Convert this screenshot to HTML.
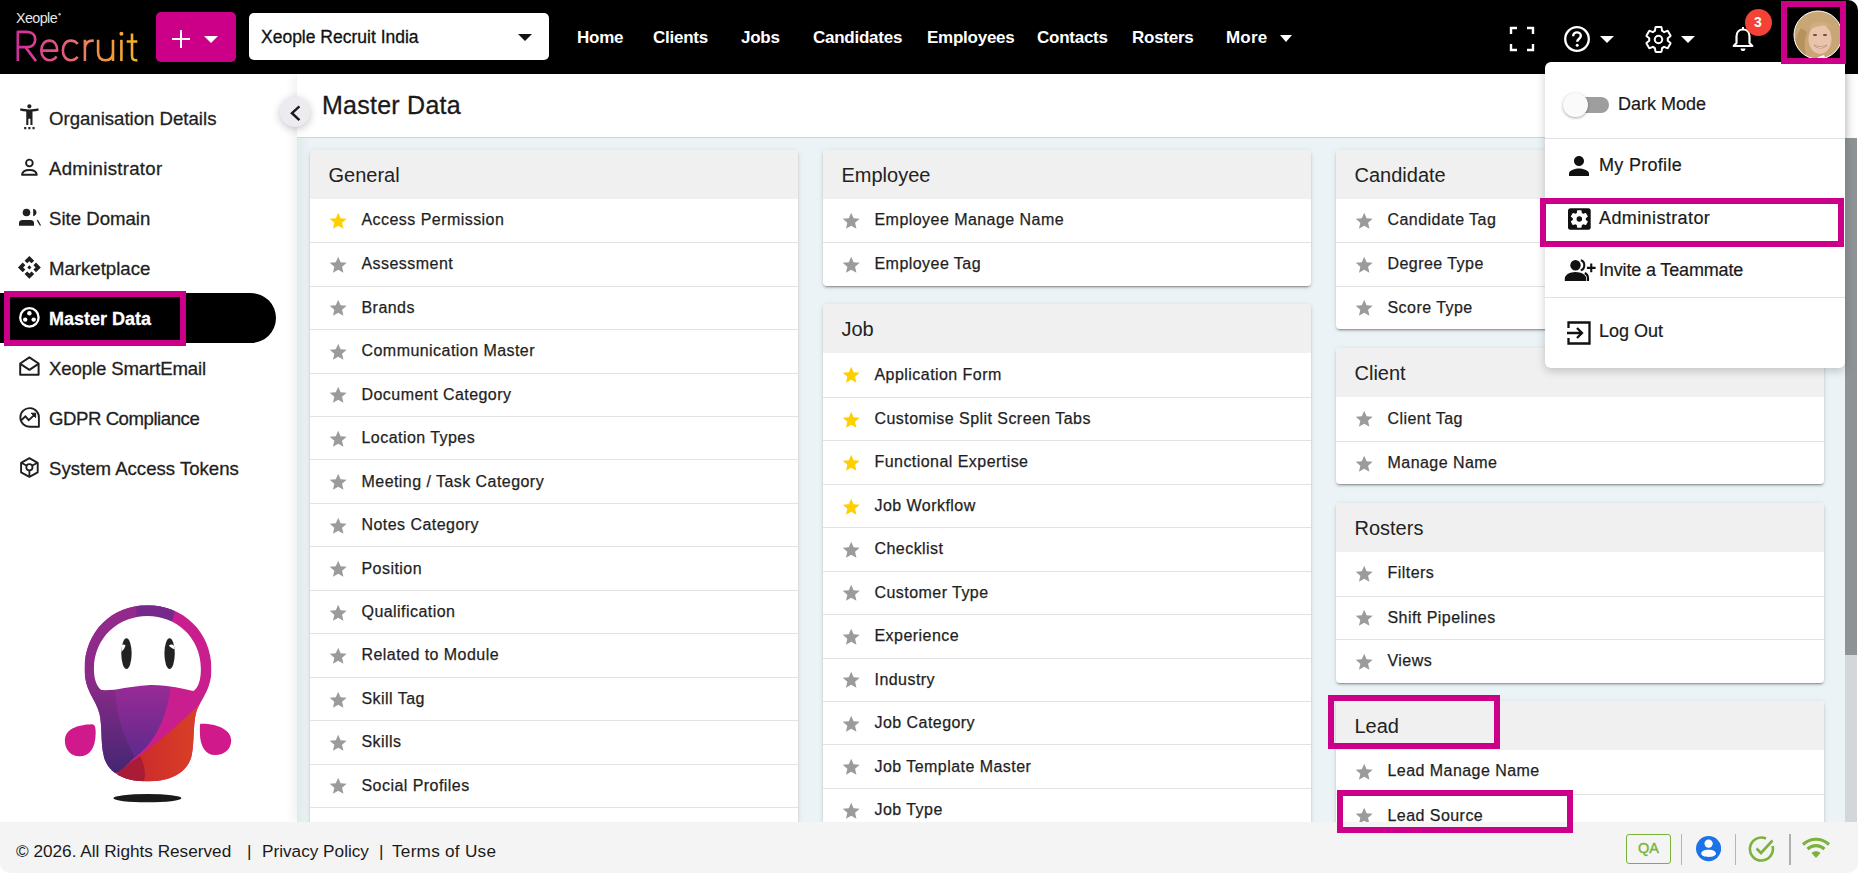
<!DOCTYPE html>
<html><head><meta charset="utf-8">
<style>
*{box-sizing:border-box}
html,body{margin:0;padding:0;width:1858px;height:873px;overflow:hidden;background:#fff;font-family:"Liberation Sans", sans-serif}
.abs{position:absolute}
#hdr{position:absolute;left:0;top:0;width:1858px;height:74px;background:#000;border-top-right-radius:10px}
.nav{position:absolute;top:26.5px;color:#fff;font-weight:700;font-size:17px;letter-spacing:-0.25px;line-height:22px;white-space:nowrap}
#side{position:absolute;left:0;top:74px;width:297px;height:748px;background:#fff}
.sitem{position:absolute;left:49px;height:24px;line-height:24px;white-space:nowrap;margin-top:0.7px;-webkit-text-stroke:0.3px currentColor}
#main{position:absolute;left:297px;top:74px;width:1548px;height:748px;background:#ecf3f6;box-shadow:-3px 0 10px rgba(0,0,0,0.07)}
#mclip{position:absolute;left:0;top:0;width:1548px;height:748px;overflow:hidden}
#mhead{position:absolute;left:0;top:0;width:1548px;height:63.5px;background:#fff;border-bottom:1px solid #cfd3dc}
.card{position:absolute;background:#fff;border-radius:4px;box-shadow:0 3px 1px -2px rgba(0,0,0,.2),0 2px 2px 0 rgba(0,0,0,.14),0 1px 5px 0 rgba(0,0,0,.12);overflow:hidden}
.chead{position:absolute;left:0;top:0;width:100%;background:#f0f0f0}
.chead span{position:absolute;left:18.5px;top:13px;font-size:20px;line-height:24px;color:#222}
.row{position:absolute;left:0;width:100%;border-top:1px solid #e2e2e2}
.row:first-of-type{border-top:none}
.row span{position:absolute;left:51.5px;top:11.2px;font-size:16px;letter-spacing:0.45px;color:#1f1f1f;white-space:nowrap;line-height:20px;-webkit-text-stroke:0.25px #1f1f1f}
#foot{position:absolute;left:0;top:822px;width:1858px;height:51px;background:#f4f4f4;border-radius:0 0 10px 10px}
.menu{position:absolute;left:1545px;top:62.3px;width:300px;height:306px;background:#fff;border-radius:6px 0 6px 6px;box-shadow:0 3px 10px rgba(0,0,0,0.2)}
.mi{position:absolute;font-size:18px;line-height:22px;color:#1a1a1a;white-space:nowrap;-webkit-text-stroke:0.2px #1a1a1a}
.hl{position:absolute;border:6px solid #cc0088}
</style></head><body>
<div id="hdr">
  <svg class="abs" style="left:0;top:0" width="150" height="74" viewBox="0 0 150 74">
  <defs><linearGradient id="rg" gradientUnits="userSpaceOnUse" x1="16" y1="0" x2="138" y2="0"><stop offset="0" stop-color="#d12e9e"/><stop offset="0.35" stop-color="#e0577e"/><stop offset="0.65" stop-color="#ef8a4e"/><stop offset="1" stop-color="#f6b224"/></linearGradient></defs>
  <g fill="none" stroke="url(#rg)" stroke-width="2.6" stroke-linecap="butt" stroke-linejoin="round">
  <path d="M17.8,61.1V31.9H26.8C32.3,31.9 35.2,35.1 35.2,39.5C35.2,43.9 32.3,47.1 26.8,47.1H17.8M25.5,47.1L36,61.1"/>
  <path d="M41.5,50.6H57.2C57.2,44.5 54,40.6 49.4,40.6C44.6,40.6 41.3,44.8 41.3,50.4C41.3,56 44.8,60.2 49.6,60.2C52.8,60.2 55.1,58.8 56.5,56.4"/>
  <path d="M77.6,44C76.1,41.8 73.6,40.6 70.8,40.6C66,40.6 62.9,44.8 62.9,50.4C62.9,56 66,60.2 70.8,60.2C73.6,60.2 76.1,59 77.6,56.8"/>
  <path d="M84.9,61.1V39.8M84.9,47.5C85.4,42.6 88.4,40.4 93.8,40.7"/>
  <path d="M98.1,39.8V52.2C98.1,57.5 101,60.2 105.5,60.2C110,60.2 113,57.5 113,52.2M113,39.8V61.1"/>
  <path d="M121.4,39.8V61.1"/>
  <path d="M132,33.6V55.8C132,59.4 133.6,60.6 137.4,60.2M126.7,41.5H137.3"/>
  </g>
  <circle cx="121.4" cy="33.7" r="2" fill="#f3a83a"/>
  <text x="16" y="22.7" font-family="Liberation Sans" font-size="14.6" fill="#e8e8e8" letter-spacing="-0.6" textLength="41" lengthAdjust="spacingAndGlyphs">Xeople</text>
  <circle cx="59.6" cy="14.3" r="1.2" fill="#bbb"/>
</svg>
  <div class="abs" style="left:156px;top:12px;width:80px;height:50px;background:#cc0088;border-radius:5px">
    <div class="abs" style="left:16px;top:26px;width:18px;height:2px;background:#fff"></div>
    <div class="abs" style="left:24px;top:18px;width:2px;height:18px;background:#fff"></div>
    <div class="abs" style="left:48px;top:24px;width:0;height:0;border-left:7px solid transparent;border-right:7px solid transparent;border-top:7px solid #fff"></div>
  </div>
  <div class="abs" style="left:249px;top:13px;width:300px;height:47px;background:#fff;border-radius:5px">
    <div class="abs" style="left:12px;top:13px;font-size:17.5px;line-height:22px;color:#111;-webkit-text-stroke:0.3px #111">Xeople Recruit India</div>
    <div class="abs" style="left:269px;top:21px;width:0;height:0;border-left:7px solid transparent;border-right:7px solid transparent;border-top:7px solid #111"></div>
  </div>
  <div class="nav" style="left:577px">Home</div>
  <div class="nav" style="left:653px">Clients</div>
  <div class="nav" style="left:741px">Jobs</div>
  <div class="nav" style="left:813px">Candidates</div>
  <div class="nav" style="left:927px">Employees</div>
  <div class="nav" style="left:1037px">Contacts</div>
  <div class="nav" style="left:1132px">Rosters</div>
  <div class="nav" style="left:1226px;letter-spacing:0.2px">More</div>
  <div class="abs" style="left:1280px;top:35px;width:0;height:0;border-left:6.5px solid transparent;border-right:6.5px solid transparent;border-top:7px solid #fff"></div>
  <!-- fullscreen -->
  <svg class="abs" style="left:1509px;top:26px" width="26" height="26" viewBox="0 0 26 26"><path fill="none" stroke="#fff" stroke-width="2.4" d="M2 8V2h6M18 2h6v6M24 18v6h-6M8 24H2v-6"/></svg>
  <!-- help -->
  <svg class="abs" style="left:1563px;top:25px" width="28" height="28" viewBox="0 0 28 28"><circle cx="14" cy="14" r="11.8" fill="none" stroke="#fff" stroke-width="2.3"/><path fill="none" stroke="#fff" stroke-width="2.4" d="M10.2 11.2c0-2.2 1.7-3.8 3.8-3.8s3.8 1.6 3.8 3.6c0 2.6-3.6 2.9-3.6 5.8"/><circle cx="14.2" cy="20.3" r="1.5" fill="#fff"/></svg>
  <div class="abs" style="left:1600px;top:36px;width:0;height:0;border-left:7px solid transparent;border-right:7px solid transparent;border-top:7px solid #fff"></div>
  <!-- gear -->
  <svg class="abs" style="left:1642.5px;top:23.5px" width="31" height="31" viewBox="0 0 24 24"><path fill="none" stroke="#fff" stroke-width="1.55" stroke-linejoin="round" d="M19.14,12.94c0.04-0.3,0.06-0.61,0.06-0.94c0-0.32-0.02-0.64-0.07-0.94l2.03-1.58c0.18-0.14,0.23-0.41,0.12-0.61l-1.92-3.32c-0.12-0.22-0.37-0.29-0.59-0.22l-2.39,0.96c-0.5-0.38-1.03-0.7-1.62-0.94L14.4,2.81c-0.04-0.24-0.24-0.41-0.48-0.41h-3.84c-0.24,0-0.43,0.17-0.47,0.41L9.25,5.35C8.66,5.59,8.12,5.92,7.63,6.29L5.24,5.33c-0.22-0.08-0.47,0-0.59,0.22L2.74,8.87C2.62,9.08,2.66,9.34,2.86,9.48l2.03,1.58C4.84,11.36,4.8,11.69,4.8,12s0.02,0.64,0.07,0.94l-2.03,1.58c-0.18,0.14-0.23,0.41-0.12,0.61l1.92,3.32c0.12,0.22,0.37,0.29,0.59,0.22l2.39-0.96c0.5,0.38,1.03,0.7,1.62,0.94l0.36,2.54c0.05,0.24,0.24,0.41,0.48,0.41h3.84c0.24,0,0.44-0.17,0.47-0.41l0.36-2.54c0.59-0.24,1.13-0.56,1.62-0.94l2.39,0.96c0.22,0.08,0.47,0,0.59-0.22l1.92-3.32c0.12-0.22,0.07-0.47-0.12-0.61L19.14,12.94z"/><circle cx="12" cy="12" r="2.9" fill="none" stroke="#fff" stroke-width="1.55"/></svg>
  <div class="abs" style="left:1681px;top:36px;width:0;height:0;border-left:7px solid transparent;border-right:7px solid transparent;border-top:7px solid #fff"></div>
  <!-- bell -->
  <svg class="abs" style="left:1731px;top:26px" width="24" height="27" viewBox="0 0 24 27"><path fill="none" stroke="#fff" stroke-width="2.2" stroke-linejoin="round" d="M12 3.5c-4 0-6.5 3-6.5 7v6.5l-2.8 3h18.6l-2.8-3v-6.5c0-4-2.5-7-6.5-7z"/><path fill="#fff" d="M9.5 22.5h5c0 1.6-1.1 2.6-2.5 2.6s-2.5-1-2.5-2.6z"/><rect x="11" y="1" width="2" height="3" fill="#fff"/></svg>
  <div class="abs" style="left:1744.5px;top:8.5px;width:27px;height:27px;border-radius:50%;background:#f44336;color:#fff;font-weight:700;font-size:14px;line-height:27px;text-align:center">3</div>
  <!-- avatar -->
  <div class="abs" style="left:1781px;top:1px;width:65px;height:63px;border:6px solid #cc0088;z-index:2"></div>
  <svg class="abs" style="left:1793px;top:10px" width="50" height="50" viewBox="0 0 50 50">
  <defs><clipPath id="avc"><circle cx="25" cy="25" r="24"/></clipPath>
  <radialGradient id="hair" cx="0.45" cy="0.4" r="0.7"><stop offset="0" stop-color="#d8b88a"/><stop offset="0.7" stop-color="#c4a070"/><stop offset="1" stop-color="#9a7a50"/></radialGradient></defs>
  <g clip-path="url(#avc)">
  <rect width="50" height="50" fill="url(#hair)"/>
  <path d="M3,20 C6,6 20,2 30,4 C42,6 48,16 48,28 L48,50 L0,50 Z" fill="#c9a676"/>
  <path d="M14,22 C10,32 12,42 14,50 L2,50 C0,40 2,26 8,18 Z" fill="#b8925e"/>
  <ellipse cx="27" cy="29" rx="11.5" ry="15" fill="#e9c4aa"/>
  <path d="M17,16 C22,10 34,10 40,18 C36,15 26,14 17,20 Z" fill="#cfae80"/>
  <ellipse cx="22" cy="25" rx="2.2" ry="1" fill="#6a4a3a"/>
  <ellipse cx="32" cy="25" rx="2.2" ry="1" fill="#6a4a3a"/>
  <path d="M21,35 C24,39 31,39 34,35 C31,37 24,37 21,35 Z" fill="#f4f0ea" stroke="#b07060" stroke-width="0.6"/>
  <path d="M40,46 L50,40 L50,50 L38,50 Z" fill="#3a3a36"/>
  <path d="M25,47 L31,45 L33,50 L24,50 Z" fill="#f8f8f8"/>
  </g>
  <circle cx="25" cy="25" r="24" fill="none" stroke="#fff" stroke-width="1"/>
</svg>
</div>

<div id="side">
  <div class="abs" style="left:0;top:0;width:297px;height:748px">
  </div>
</div>
<div class="sitem" style="top:106px;color:#1f1f1f;font-weight:400;font-size:18.6px;letter-spacing:0px">Organisation Details</div><div class="sitem" style="top:156px;color:#1f1f1f;font-weight:400;font-size:18.6px;letter-spacing:0.3px">Administrator</div><div class="sitem" style="top:206px;color:#1f1f1f;font-weight:400;font-size:18.6px;letter-spacing:0px">Site Domain</div><div class="sitem" style="top:256px;color:#1f1f1f;font-weight:400;font-size:18.6px;letter-spacing:0px">Marketplace</div><div style="position:absolute;left:0;top:293px;width:276px;height:50px;background:#000;border-radius:0 25px 25px 0"></div><div class="sitem" style="top:306px;color:#fff;font-weight:700;font-size:18px;letter-spacing:0px">Master Data</div><div class="sitem" style="top:356px;color:#1f1f1f;font-weight:400;font-size:18.6px;letter-spacing:-0.12px">Xeople SmartEmail</div><div class="sitem" style="top:406px;color:#1f1f1f;font-weight:400;font-size:18.6px;letter-spacing:-0.45px">GDPR Compliance</div><div class="sitem" style="top:456px;color:#1f1f1f;font-weight:400;font-size:18.6px;letter-spacing:0px">System Access Tokens</div>
<svg style="position:absolute;left:0;top:0" width="297" height="500" viewBox="0 0 297 500">
<g fill="#1f1f1f" transform="translate(16.9,104.2) scale(1.04)"><path d="M20.5,4c-2.61,0.7-5.67,1-8.5,1S6.11,4.7,3.5,4L3,6c1.86,0.5,4,0.83,6,1v13h2v-6h2v6h2V7c2-0.17,4.14-0.5,6-1L20.5,4z M12,4c1.1,0,2-0.9,2-2s-0.9-2-2-2s-2,0.9-2,2S10.9,4,12,4z M7,24h2v-2H7V24z M11,24h2v-2h-2V24z M15,24h2v-2h-2V24z"/></g>
<circle cx="29.4" cy="163" r="3.35" fill="none" stroke="#1f1f1f" stroke-width="1.9"/>
<path d="M22,174.8c0.3-3.3,3.4-4.8,7.4-4.8s7.1,1.5,7.4,4.8z" fill="none" stroke="#1f1f1f" stroke-width="1.9" stroke-linejoin="round"/>
<circle cx="26.5" cy="212.5" r="3.8" fill="#1f1f1f"/>
<path d="M19,225.7v-2.7c0-2,1.5-3,3.5-3h8c2,0,3.5,1,3.5,3v2.7z" fill="#1f1f1f"/>
<path d="M33.2,208.8c1.9,0.5,3.3,1.8,3.3,3.7s-1.4,3.2-3.3,3.7z" fill="#1f1f1f"/>
<path d="M37.3,220.2l3.2,5.3" stroke="#1f1f1f" stroke-width="1.3"/>
<g fill="#1f1f1f" transform="translate(16.9,254.9) scale(1.04)"><path d="M14 12l-2 2-2-2 2-2 2 2zm-2-6l2.12 2.12 2.5-2.5L12 1 7.38 5.62l2.5 2.5L12 6zm-6 6l2.12-2.12-2.5-2.5L1 12l4.62 4.62 2.5-2.5L6 12zm12 0l-2.12 2.12 2.5 2.5L23 12l-4.62-4.62-2.5 2.5L18 12zm-6 6l-2.12-2.12-2.5 2.5L12 23l4.62-4.62-2.5-2.5L12 18z"/></g>
<circle cx="29.4" cy="317.4" r="9.2" fill="none" stroke="#fff" stroke-width="2.3"/>
<circle cx="29.4" cy="313.2" r="2.2" fill="#fff"/><circle cx="25.2" cy="319.6" r="2.2" fill="#fff"/><circle cx="33.7" cy="319.6" r="2.2" fill="#fff"/>
<path d="M20.2,363.5L29.4,357.3l9.2,6.2v11.3H20.2z" fill="none" stroke="#1f1f1f" stroke-width="2" stroke-linejoin="round"/>
<path d="M20.4,363.8L29.4,369.8l9,-6" fill="none" stroke="#1f1f1f" stroke-width="2" stroke-linejoin="round"/>
<path d="M38.9,418.4V426.7H30.2A9.3,9.3 0 1 1 38.9,418.4z" fill="none" stroke="#1f1f1f" stroke-width="1.9" stroke-linejoin="round"/>
<path d="M21.3,420.2l4.1,-3.8l3.3,3.8l6,-5.6" fill="none" stroke="#1f1f1f" stroke-width="1.9"/>
<path d="M31.2,413.2h4.4v4.4z" fill="#1f1f1f" stroke="#1f1f1f" stroke-width="1"/>
<circle cx="37.2" cy="425" r="0.6" fill="#fff"/>
<path d="M29.4,458.2l8.3,4.6v9.5l-8.3,4.6l-8.3,-4.6v-9.5z" fill="none" stroke="#1f1f1f" stroke-width="1.9" stroke-linejoin="round"/>
<circle cx="29.4" cy="467.3" r="3.1" fill="none" stroke="#1f1f1f" stroke-width="1.8"/>
<path d="M29.4,470.4v6.6M21.5,462.8l5.2,3M37.3,462.8l-5.2,3" fill="none" stroke="#1f1f1f" stroke-width="1.8"/>
</svg>
<div class="hl" style="left:4.2px;top:291px;width:181.5px;height:55px"></div>
<svg style="position:absolute;left:55px;top:595px" width="190" height="215" viewBox="0 0 771 873" preserveAspectRatio="none">
<defs>
<clipPath id="bodyclip"><path d="M375,42 C520,42 635,150 635,300 C635,390 585,430 572,480 C560,530 565,600 555,650 C540,720 470,757 375,757 C280,757 210,720 197,650 C185,600 192,530 180,480 C165,420 120,390 120,300 C120,150 230,42 375,42 Z"/></clipPath>
<linearGradient id="lg1" x1="0" y1="0" x2="0" y2="1"><stop offset="0" stop-color="#952a8c"/><stop offset="0.45" stop-color="#8a2a88"/><stop offset="1" stop-color="#3c2670"/></linearGradient>
<linearGradient id="lg2" x1="0" y1="0" x2="1" y2="0"><stop offset="0" stop-color="#c51f2e"/><stop offset="1" stop-color="#e04a24"/></linearGradient>
<linearGradient id="lg3" x1="0" y1="0" x2="0" y2="1"><stop offset="0" stop-color="#9a2a96"/><stop offset="1" stop-color="#5e2a8c"/></linearGradient>
</defs>
<ellipse cx="375" cy="825" rx="138" ry="17" fill="#1a1a1a"/>
<path d="M40,590 C40,545 90,527 150,525 C163,525 165,540 165,560 C165,620 140,655 100,655 C60,655 40,625 40,590 Z" fill="#d0198a"/>
<path d="M590,523 C650,520 715,545 715,590 C715,625 690,650 650,650 C610,650 588,610 588,560 C588,540 588,523 590,523 Z" fill="#d0198a"/>
<g clip-path="url(#bodyclip)">
<rect x="0" y="0" width="771" height="873" fill="#c81e8e"/>
<path d="M100,20 L480,20 C475,150 470,300 470,370 C430,560 340,650 258,720 L100,760 Z" fill="url(#lg1)"/>
<path d="M330,30 C400,30 460,40 490,60 L470,120 C420,100 370,95 330,100 Z" fill="#6a2a8a" opacity="0.7"/>
<path d="M245,380 C300,360 420,355 470,370 C450,520 400,600 325,660 C290,600 245,500 245,380 Z" fill="url(#lg3)"/>
<path d="M258,720 C360,640 470,560 600,430 L700,430 L700,800 L200,800 Z" fill="url(#lg2)"/>
<path d="M258,720 C290,690 320,670 345,655 C365,690 370,730 360,760 L240,760 Z" fill="#a81c36"/>
</g>
<path d="M375,85 C490,85 592,170 592,300 C592,345 582,375 562,390 C520,382 450,362 375,366 C300,370 240,390 188,386 C168,370 158,340 158,300 C158,170 260,85 375,85 Z" fill="#fff"/>
<ellipse cx="290" cy="238" rx="21" ry="62" fill="#222"/>
<ellipse cx="465" cy="238" rx="21" ry="62" fill="#222"/>
<path d="M286,205 C280,200 274,200 270,206 L270,230 C278,222 284,214 286,205 Z" fill="#fff"/>
<path d="M482,205 C476,200 468,200 462,206 C468,212 476,218 486,220 Z" fill="#fff"/>
</svg>

<div id="main"><div id="mclip">
  <div id="mhead">
    <div class="abs" style="left:25px;top:17px;font-size:25px;line-height:28px;color:#1a1a1a;letter-spacing:0.25px;-webkit-text-stroke:0.3px #1a1a1a">Master Data</div>
  </div>
  <div class="abs" style="left:0;top:63.5px;width:13px;height:700px;background:linear-gradient(90deg,rgba(0,0,0,0.04),rgba(0,0,0,0))"></div>
  <div style="position:absolute;left:-297px;top:-74px;width:1858px;height:873px">
  <div class="card" style="left:310px;top:149.8px;width:488px;height:700.75px"><div class="chead" style="height:49px"><span>General</span></div><div class="row" style="top:49.00px;height:43.45px;border-top:none;padding-top:0"><svg style="position:absolute;left:17.9px;top:11.8px" width="20.4" height="20.4" viewBox="0 0 24 24"><path fill="#ffd000" d="M12 17.27L18.18 21l-1.64-7.03L22 9.24l-7.19-.61L12 2 9.19 8.63 2 9.24l5.46 4.73L5.82 21z"/></svg><span>Access Permission</span></div><div class="row" style="top:92.45px;height:43.45px"><svg style="position:absolute;left:17.9px;top:11.8px" width="20.4" height="20.4" viewBox="0 0 24 24"><path fill="#9b9b9b" d="M12 17.27L18.18 21l-1.64-7.03L22 9.24l-7.19-.61L12 2 9.19 8.63 2 9.24l5.46 4.73L5.82 21z"/></svg><span>Assessment</span></div><div class="row" style="top:135.90px;height:43.45px"><svg style="position:absolute;left:17.9px;top:11.8px" width="20.4" height="20.4" viewBox="0 0 24 24"><path fill="#9b9b9b" d="M12 17.27L18.18 21l-1.64-7.03L22 9.24l-7.19-.61L12 2 9.19 8.63 2 9.24l5.46 4.73L5.82 21z"/></svg><span>Brands</span></div><div class="row" style="top:179.35px;height:43.45px"><svg style="position:absolute;left:17.9px;top:11.8px" width="20.4" height="20.4" viewBox="0 0 24 24"><path fill="#9b9b9b" d="M12 17.27L18.18 21l-1.64-7.03L22 9.24l-7.19-.61L12 2 9.19 8.63 2 9.24l5.46 4.73L5.82 21z"/></svg><span>Communication Master</span></div><div class="row" style="top:222.80px;height:43.45px"><svg style="position:absolute;left:17.9px;top:11.8px" width="20.4" height="20.4" viewBox="0 0 24 24"><path fill="#9b9b9b" d="M12 17.27L18.18 21l-1.64-7.03L22 9.24l-7.19-.61L12 2 9.19 8.63 2 9.24l5.46 4.73L5.82 21z"/></svg><span>Document Category</span></div><div class="row" style="top:266.25px;height:43.45px"><svg style="position:absolute;left:17.9px;top:11.8px" width="20.4" height="20.4" viewBox="0 0 24 24"><path fill="#9b9b9b" d="M12 17.27L18.18 21l-1.64-7.03L22 9.24l-7.19-.61L12 2 9.19 8.63 2 9.24l5.46 4.73L5.82 21z"/></svg><span>Location Types</span></div><div class="row" style="top:309.70px;height:43.45px"><svg style="position:absolute;left:17.9px;top:11.8px" width="20.4" height="20.4" viewBox="0 0 24 24"><path fill="#9b9b9b" d="M12 17.27L18.18 21l-1.64-7.03L22 9.24l-7.19-.61L12 2 9.19 8.63 2 9.24l5.46 4.73L5.82 21z"/></svg><span>Meeting / Task Category</span></div><div class="row" style="top:353.15px;height:43.45px"><svg style="position:absolute;left:17.9px;top:11.8px" width="20.4" height="20.4" viewBox="0 0 24 24"><path fill="#9b9b9b" d="M12 17.27L18.18 21l-1.64-7.03L22 9.24l-7.19-.61L12 2 9.19 8.63 2 9.24l5.46 4.73L5.82 21z"/></svg><span>Notes Category</span></div><div class="row" style="top:396.60px;height:43.45px"><svg style="position:absolute;left:17.9px;top:11.8px" width="20.4" height="20.4" viewBox="0 0 24 24"><path fill="#9b9b9b" d="M12 17.27L18.18 21l-1.64-7.03L22 9.24l-7.19-.61L12 2 9.19 8.63 2 9.24l5.46 4.73L5.82 21z"/></svg><span>Position</span></div><div class="row" style="top:440.05px;height:43.45px"><svg style="position:absolute;left:17.9px;top:11.8px" width="20.4" height="20.4" viewBox="0 0 24 24"><path fill="#9b9b9b" d="M12 17.27L18.18 21l-1.64-7.03L22 9.24l-7.19-.61L12 2 9.19 8.63 2 9.24l5.46 4.73L5.82 21z"/></svg><span>Qualification</span></div><div class="row" style="top:483.50px;height:43.45px"><svg style="position:absolute;left:17.9px;top:11.8px" width="20.4" height="20.4" viewBox="0 0 24 24"><path fill="#9b9b9b" d="M12 17.27L18.18 21l-1.64-7.03L22 9.24l-7.19-.61L12 2 9.19 8.63 2 9.24l5.46 4.73L5.82 21z"/></svg><span>Related to Module</span></div><div class="row" style="top:526.95px;height:43.45px"><svg style="position:absolute;left:17.9px;top:11.8px" width="20.4" height="20.4" viewBox="0 0 24 24"><path fill="#9b9b9b" d="M12 17.27L18.18 21l-1.64-7.03L22 9.24l-7.19-.61L12 2 9.19 8.63 2 9.24l5.46 4.73L5.82 21z"/></svg><span>Skill Tag</span></div><div class="row" style="top:570.40px;height:43.45px"><svg style="position:absolute;left:17.9px;top:11.8px" width="20.4" height="20.4" viewBox="0 0 24 24"><path fill="#9b9b9b" d="M12 17.27L18.18 21l-1.64-7.03L22 9.24l-7.19-.61L12 2 9.19 8.63 2 9.24l5.46 4.73L5.82 21z"/></svg><span>Skills</span></div><div class="row" style="top:613.85px;height:43.45px"><svg style="position:absolute;left:17.9px;top:11.8px" width="20.4" height="20.4" viewBox="0 0 24 24"><path fill="#9b9b9b" d="M12 17.27L18.18 21l-1.64-7.03L22 9.24l-7.19-.61L12 2 9.19 8.63 2 9.24l5.46 4.73L5.82 21z"/></svg><span>Social Profiles</span></div><div class="row" style="top:657.30px;height:43.45px"><svg style="position:absolute;left:17.9px;top:11.8px" width="20.4" height="20.4" viewBox="0 0 24 24"><path fill="#9b9b9b" d="M12 17.27L18.18 21l-1.64-7.03L22 9.24l-7.19-.61L12 2 9.19 8.63 2 9.24l5.46 4.73L5.82 21z"/></svg><span>Sources</span></div></div><div class="card" style="left:823px;top:149.8px;width:488px;height:135.90px"><div class="chead" style="height:49px"><span>Employee</span></div><div class="row" style="top:49.00px;height:43.45px;border-top:none;padding-top:0"><svg style="position:absolute;left:17.9px;top:11.8px" width="20.4" height="20.4" viewBox="0 0 24 24"><path fill="#9b9b9b" d="M12 17.27L18.18 21l-1.64-7.03L22 9.24l-7.19-.61L12 2 9.19 8.63 2 9.24l5.46 4.73L5.82 21z"/></svg><span>Employee Manage Name</span></div><div class="row" style="top:92.45px;height:43.45px"><svg style="position:absolute;left:17.9px;top:11.8px" width="20.4" height="20.4" viewBox="0 0 24 24"><path fill="#9b9b9b" d="M12 17.27L18.18 21l-1.64-7.03L22 9.24l-7.19-.61L12 2 9.19 8.63 2 9.24l5.46 4.73L5.82 21z"/></svg><span>Employee Tag</span></div></div><div class="card" style="left:823px;top:304.4px;width:488px;height:570.40px"><div class="chead" style="height:49px"><span>Job</span></div><div class="row" style="top:49.00px;height:43.45px;border-top:none;padding-top:0"><svg style="position:absolute;left:17.9px;top:11.8px" width="20.4" height="20.4" viewBox="0 0 24 24"><path fill="#ffd000" d="M12 17.27L18.18 21l-1.64-7.03L22 9.24l-7.19-.61L12 2 9.19 8.63 2 9.24l5.46 4.73L5.82 21z"/></svg><span>Application Form</span></div><div class="row" style="top:92.45px;height:43.45px"><svg style="position:absolute;left:17.9px;top:11.8px" width="20.4" height="20.4" viewBox="0 0 24 24"><path fill="#ffd000" d="M12 17.27L18.18 21l-1.64-7.03L22 9.24l-7.19-.61L12 2 9.19 8.63 2 9.24l5.46 4.73L5.82 21z"/></svg><span>Customise Split Screen Tabs</span></div><div class="row" style="top:135.90px;height:43.45px"><svg style="position:absolute;left:17.9px;top:11.8px" width="20.4" height="20.4" viewBox="0 0 24 24"><path fill="#ffd000" d="M12 17.27L18.18 21l-1.64-7.03L22 9.24l-7.19-.61L12 2 9.19 8.63 2 9.24l5.46 4.73L5.82 21z"/></svg><span>Functional Expertise</span></div><div class="row" style="top:179.35px;height:43.45px"><svg style="position:absolute;left:17.9px;top:11.8px" width="20.4" height="20.4" viewBox="0 0 24 24"><path fill="#ffd000" d="M12 17.27L18.18 21l-1.64-7.03L22 9.24l-7.19-.61L12 2 9.19 8.63 2 9.24l5.46 4.73L5.82 21z"/></svg><span>Job Workflow</span></div><div class="row" style="top:222.80px;height:43.45px"><svg style="position:absolute;left:17.9px;top:11.8px" width="20.4" height="20.4" viewBox="0 0 24 24"><path fill="#9b9b9b" d="M12 17.27L18.18 21l-1.64-7.03L22 9.24l-7.19-.61L12 2 9.19 8.63 2 9.24l5.46 4.73L5.82 21z"/></svg><span>Checklist</span></div><div class="row" style="top:266.25px;height:43.45px"><svg style="position:absolute;left:17.9px;top:11.8px" width="20.4" height="20.4" viewBox="0 0 24 24"><path fill="#9b9b9b" d="M12 17.27L18.18 21l-1.64-7.03L22 9.24l-7.19-.61L12 2 9.19 8.63 2 9.24l5.46 4.73L5.82 21z"/></svg><span>Customer Type</span></div><div class="row" style="top:309.70px;height:43.45px"><svg style="position:absolute;left:17.9px;top:11.8px" width="20.4" height="20.4" viewBox="0 0 24 24"><path fill="#9b9b9b" d="M12 17.27L18.18 21l-1.64-7.03L22 9.24l-7.19-.61L12 2 9.19 8.63 2 9.24l5.46 4.73L5.82 21z"/></svg><span>Experience</span></div><div class="row" style="top:353.15px;height:43.45px"><svg style="position:absolute;left:17.9px;top:11.8px" width="20.4" height="20.4" viewBox="0 0 24 24"><path fill="#9b9b9b" d="M12 17.27L18.18 21l-1.64-7.03L22 9.24l-7.19-.61L12 2 9.19 8.63 2 9.24l5.46 4.73L5.82 21z"/></svg><span>Industry</span></div><div class="row" style="top:396.60px;height:43.45px"><svg style="position:absolute;left:17.9px;top:11.8px" width="20.4" height="20.4" viewBox="0 0 24 24"><path fill="#9b9b9b" d="M12 17.27L18.18 21l-1.64-7.03L22 9.24l-7.19-.61L12 2 9.19 8.63 2 9.24l5.46 4.73L5.82 21z"/></svg><span>Job Category</span></div><div class="row" style="top:440.05px;height:43.45px"><svg style="position:absolute;left:17.9px;top:11.8px" width="20.4" height="20.4" viewBox="0 0 24 24"><path fill="#9b9b9b" d="M12 17.27L18.18 21l-1.64-7.03L22 9.24l-7.19-.61L12 2 9.19 8.63 2 9.24l5.46 4.73L5.82 21z"/></svg><span>Job Template Master</span></div><div class="row" style="top:483.50px;height:43.45px"><svg style="position:absolute;left:17.9px;top:11.8px" width="20.4" height="20.4" viewBox="0 0 24 24"><path fill="#9b9b9b" d="M12 17.27L18.18 21l-1.64-7.03L22 9.24l-7.19-.61L12 2 9.19 8.63 2 9.24l5.46 4.73L5.82 21z"/></svg><span>Job Type</span></div><div class="row" style="top:526.95px;height:43.45px"><svg style="position:absolute;left:17.9px;top:11.8px" width="20.4" height="20.4" viewBox="0 0 24 24"><path fill="#9b9b9b" d="M12 17.27L18.18 21l-1.64-7.03L22 9.24l-7.19-.61L12 2 9.19 8.63 2 9.24l5.46 4.73L5.82 21z"/></svg><span>Job Status</span></div></div><div class="card" style="left:1336px;top:149.8px;width:488px;height:179.35px"><div class="chead" style="height:49px"><span>Candidate</span></div><div class="row" style="top:49.00px;height:43.45px;border-top:none;padding-top:0"><svg style="position:absolute;left:17.9px;top:11.8px" width="20.4" height="20.4" viewBox="0 0 24 24"><path fill="#9b9b9b" d="M12 17.27L18.18 21l-1.64-7.03L22 9.24l-7.19-.61L12 2 9.19 8.63 2 9.24l5.46 4.73L5.82 21z"/></svg><span>Candidate Tag</span></div><div class="row" style="top:92.45px;height:43.45px"><svg style="position:absolute;left:17.9px;top:11.8px" width="20.4" height="20.4" viewBox="0 0 24 24"><path fill="#9b9b9b" d="M12 17.27L18.18 21l-1.64-7.03L22 9.24l-7.19-.61L12 2 9.19 8.63 2 9.24l5.46 4.73L5.82 21z"/></svg><span>Degree Type</span></div><div class="row" style="top:135.90px;height:43.45px"><svg style="position:absolute;left:17.9px;top:11.8px" width="20.4" height="20.4" viewBox="0 0 24 24"><path fill="#9b9b9b" d="M12 17.27L18.18 21l-1.64-7.03L22 9.24l-7.19-.61L12 2 9.19 8.63 2 9.24l5.46 4.73L5.82 21z"/></svg><span>Score Type</span></div></div><div class="card" style="left:1336px;top:348.4px;width:488px;height:135.90px"><div class="chead" style="height:49px"><span>Client</span></div><div class="row" style="top:49.00px;height:43.45px;border-top:none;padding-top:0"><svg style="position:absolute;left:17.9px;top:11.8px" width="20.4" height="20.4" viewBox="0 0 24 24"><path fill="#9b9b9b" d="M12 17.27L18.18 21l-1.64-7.03L22 9.24l-7.19-.61L12 2 9.19 8.63 2 9.24l5.46 4.73L5.82 21z"/></svg><span>Client Tag</span></div><div class="row" style="top:92.45px;height:43.45px"><svg style="position:absolute;left:17.9px;top:11.8px" width="20.4" height="20.4" viewBox="0 0 24 24"><path fill="#9b9b9b" d="M12 17.27L18.18 21l-1.64-7.03L22 9.24l-7.19-.61L12 2 9.19 8.63 2 9.24l5.46 4.73L5.82 21z"/></svg><span>Manage Name</span></div></div><div class="card" style="left:1336px;top:503.2px;width:488px;height:179.35px"><div class="chead" style="height:49px"><span>Rosters</span></div><div class="row" style="top:49.00px;height:43.45px;border-top:none;padding-top:0"><svg style="position:absolute;left:17.9px;top:11.8px" width="20.4" height="20.4" viewBox="0 0 24 24"><path fill="#9b9b9b" d="M12 17.27L18.18 21l-1.64-7.03L22 9.24l-7.19-.61L12 2 9.19 8.63 2 9.24l5.46 4.73L5.82 21z"/></svg><span>Filters</span></div><div class="row" style="top:92.45px;height:43.45px"><svg style="position:absolute;left:17.9px;top:11.8px" width="20.4" height="20.4" viewBox="0 0 24 24"><path fill="#9b9b9b" d="M12 17.27L18.18 21l-1.64-7.03L22 9.24l-7.19-.61L12 2 9.19 8.63 2 9.24l5.46 4.73L5.82 21z"/></svg><span>Shift Pipelines</span></div><div class="row" style="top:135.90px;height:43.45px"><svg style="position:absolute;left:17.9px;top:11.8px" width="20.4" height="20.4" viewBox="0 0 24 24"><path fill="#9b9b9b" d="M12 17.27L18.18 21l-1.64-7.03L22 9.24l-7.19-.61L12 2 9.19 8.63 2 9.24l5.46 4.73L5.82 21z"/></svg><span>Views</span></div></div><div class="card" style="left:1336px;top:701.2px;width:488px;height:179.35px"><div class="chead" style="height:49px"><span>Lead</span></div><div class="row" style="top:49.00px;height:43.45px;border-top:none;padding-top:0"><svg style="position:absolute;left:17.9px;top:11.8px" width="20.4" height="20.4" viewBox="0 0 24 24"><path fill="#9b9b9b" d="M12 17.27L18.18 21l-1.64-7.03L22 9.24l-7.19-.61L12 2 9.19 8.63 2 9.24l5.46 4.73L5.82 21z"/></svg><span>Lead Manage Name</span></div><div class="row" style="top:92.45px;height:43.45px"><svg style="position:absolute;left:17.9px;top:11.8px" width="20.4" height="20.4" viewBox="0 0 24 24"><path fill="#9b9b9b" d="M12 17.27L18.18 21l-1.64-7.03L22 9.24l-7.19-.61L12 2 9.19 8.63 2 9.24l5.46 4.73L5.82 21z"/></svg><span>Lead Source</span></div><div class="row" style="top:135.90px;height:43.45px"><svg style="position:absolute;left:17.9px;top:11.8px" width="20.4" height="20.4" viewBox="0 0 24 24"><path fill="#9b9b9b" d="M12 17.27L18.18 21l-1.64-7.03L22 9.24l-7.19-.61L12 2 9.19 8.63 2 9.24l5.46 4.73L5.82 21z"/></svg><span>Lead Status</span></div></div>
  </div>
</div></div>
<div class="abs" style="left:280px;top:97px;width:30px;height:30px;border-radius:50%;background:#edebf0;box-shadow:0 2px 9px rgba(0,0,0,0.24)">
  <svg class="abs" style="left:0;top:0" width="30" height="30" viewBox="0 0 30 30"><path fill="none" stroke="#1a1a1a" stroke-width="2.5" stroke-linecap="square" d="M18.5,10.2L12,16.2l6.5,6"/></svg>
</div>
<!-- scrollbar -->
<div class="abs" style="left:1845px;top:74px;width:13px;height:64px;background:linear-gradient(90deg,#e6e6e6,#f8f8f8 40%,#fff)"></div>
<div class="abs" style="left:1845px;top:138px;width:12px;height:517px;background:#8e9396"></div>
<div class="abs" style="left:1845px;top:655px;width:12px;height:167px;background:#d3d7da"></div>

<div id="foot">
  <div class="abs" style="left:16px;top:18px;font-size:17.2px;line-height:22px;color:#1a1a1a;white-space:nowrap">© 2026. All Rights Reserved</div>
  <div class="abs" style="left:247px;top:18px;font-size:17.2px;line-height:22px;color:#1a1a1a">|</div>
  <div class="abs" style="left:262px;top:18px;font-size:17.2px;line-height:22px;color:#1a1a1a;white-space:nowrap">Privacy Policy</div>
  <div class="abs" style="left:379px;top:18px;font-size:17.2px;line-height:22px;color:#1a1a1a">|</div>
  <div class="abs" style="left:392px;top:18px;font-size:17.2px;line-height:22px;color:#1a1a1a;white-space:nowrap;letter-spacing:0.25px">Terms of Use</div>
  <div class="abs" style="left:1626px;top:12.3px;width:45px;height:29.5px;border:1.5px solid #7ab33a;border-radius:3px;color:#7ab33a;font-weight:400;font-size:14.5px;line-height:27.5px;text-align:center;-webkit-text-stroke:0.4px #7ab33a;letter-spacing:0px">QA</div>
  <div class="abs" style="left:1681px;top:12px;width:1px;height:31px;background:#b5b5b5"></div>
  <svg class="abs" style="left:1696px;top:14.4px" width="25.2" height="25.2" viewBox="0 0 28 28"><circle cx="14" cy="14" r="14" fill="#1a73e8"/><circle cx="14" cy="8.4" r="4.6" fill="#fff"/><path fill="#fff" d="M5.8 19.5c0-2.6 3.8-4.3 8.2-4.3s8.2 1.7 8.2 4.3c0 2.3-3.7 3.8-8.2 3.8s-8.2-1.5-8.2-3.8z"/></svg>
  <div class="abs" style="left:1735px;top:12px;width:1px;height:31px;background:#b5b5b5"></div>
  <svg class="abs" style="left:1748px;top:13px" width="28" height="28" viewBox="0 0 28 28"><path fill="none" stroke="#7ab33a" stroke-width="2.6" d="M24.5 11A11.5 11.5 0 1 1 18 3.5"/><path fill="none" stroke="#7ab33a" stroke-width="2.6" d="M8.5 13.5l4.5 4.5 11.5-12.5"/></svg>
  <div class="abs" style="left:1788.5px;top:12px;width:2px;height:31px;background:#b0b0b0"></div>
  <svg class="abs" style="left:1801px;top:14px" width="30" height="24" viewBox="0 0 30 24"><path fill="none" stroke="#7ab33a" stroke-width="3.2" d="M2 8.5c7.5-7 18.5-7 26 0M6.5 13c5-4.5 12-4.5 17 0"/><path fill="#7ab33a" d="M10.5 17c2.5-2.3 6.5-2.3 9 0L15 22z"/></svg>
</div>

<div class="menu">
  <div class="abs" style="left:18.5px;top:34.5px;width:45px;height:16.5px;border-radius:8.25px;background:#9e9e9e"></div>
  <div class="abs" style="left:18px;top:30.5px;width:24.7px;height:24.7px;border-radius:50%;background:#fafafa;box-shadow:0 1px 3px rgba(0,0,0,0.35)"></div>
  <div class="mi" style="left:73px;top:31px">Dark Mode</div>
  <div class="abs" style="left:0;top:75.5px;width:300px;height:1px;background:#e0e0e0"></div>
  <svg class="abs" style="left:19.2px;top:88.9px" width="30" height="30" viewBox="0 0 24 24"><path fill="#111" d="M12 12c2.21 0 4-1.79 4-4s-1.79-4-4-4-4 1.79-4 4 1.79 4 4 4zm0 2c-2.67 0-8 1.34-8 4v2h16v-2c0-2.66-5.33-4-8-4z"/></svg>
  <div class="mi" style="left:54px;top:91.8px;letter-spacing:0.3px">My Profile</div>
  <svg class="abs" style="left:0;top:0" width="60" height="180" viewBox="0 0 60 180"><rect x="23" y="146.3" width="22.7" height="21.4" rx="2.5" fill="#111"/><g transform="translate(23.4,146.1) scale(0.91)"><path fill="#fff" d="M19.14,12.94c0.04-0.3,0.06-0.61,0.06-0.94c0-0.32-0.02-0.64-0.07-0.94l2.03-1.58c0.18-0.14,0.23-0.41,0.12-0.61l-1.92-3.32c-0.12-0.22-0.37-0.29-0.59-0.22l-2.39,0.96c-0.5-0.38-1.03-0.7-1.62-0.94L14.4,2.81c-0.04-0.24-0.24-0.41-0.48-0.41h-3.84c-0.24,0-0.43,0.17-0.47,0.41L9.25,5.35C8.66,5.59,8.12,5.92,7.63,6.29L5.24,5.330c-0.22-0.08-0.47,0-0.59,0.22L2.74,8.87C2.62,9.08,2.66,9.34,2.86,9.48l2.03,1.58C4.84,11.36,4.8,11.69,4.8,12s0.02,0.64,0.07,0.94l-2.03,1.58c-0.18,0.14-0.23,0.41-0.12,0.61l1.920,3.32c0.12,0.22,0.37,0.29,0.59,0.22l2.39-0.96c0.5,0.38,1.03,0.7,1.62,0.94l0.36,2.54c0.05,0.24,0.24,0.41,0.48,0.41h3.84c0.24,0,0.44-0.17,0.47-0.41l0.36-2.54c0.59-0.24,1.13-0.56,1.62-0.94l2.39,0.96c0.22,0.08,0.47,0,0.59-0.22l1.92-3.32c0.12-0.22,0.07-0.47-0.12-0.61L19.14,12.94z"/><circle cx="12" cy="12" r="3" fill="#111"/></g></svg>
  <div class="mi" style="left:54px;top:145px;letter-spacing:0.4px">Administrator</div>
  <svg class="abs" style="left:17.5px;top:195px" width="34" height="26" viewBox="0 0 34 26"><circle cx="12.5" cy="8.2" r="5.2" fill="#111"/><path fill="#111" d="M1.8 24v-2.6c0-3.6 5.2-6.4 10.7-6.4s10.7 2.8 10.7 6.4V24z"/><path fill="none" stroke="#111" stroke-width="2.1" d="M17.8 3.2c2.1.6 3.5 2.5 3.5 5s-1.4 4.4-3.5 5M21.8 16c2 1 3.2 2.8 3.2 5V24"/><path fill="#111" d="M27.2 6.5h2.1v3.3h3.3v2.1h-3.3v3.3h-2.1v-3.3h-3.3V9.8h3.3z"/></svg>
  <div class="mi" style="left:54px;top:197px;letter-spacing:-0.15px">Invite a Teammate</div>
  <div class="abs" style="left:0;top:234.5px;width:300px;height:1px;background:#e0e0e0"></div>
  <svg class="abs" style="left:21px;top:258px" width="26" height="26" viewBox="0 0 26 26"><path fill="none" stroke="#111" stroke-width="2.3" d="M2.5 8V2.5h21v21h-21V18"/><path fill="none" stroke="#111" stroke-width="2.3" d="M1 13h15M11 8l5 5-5 5"/></svg>
  <div class="mi" style="left:54px;top:258px">Log Out</div>
</div>
<div class="hl" style="left:1540px;top:198px;width:304px;height:49px"></div>
<div class="hl" style="left:1328px;top:695px;width:172px;height:54px"></div>
<div class="hl" style="left:1337px;top:790px;width:236px;height:43px"></div>
</body></html>
